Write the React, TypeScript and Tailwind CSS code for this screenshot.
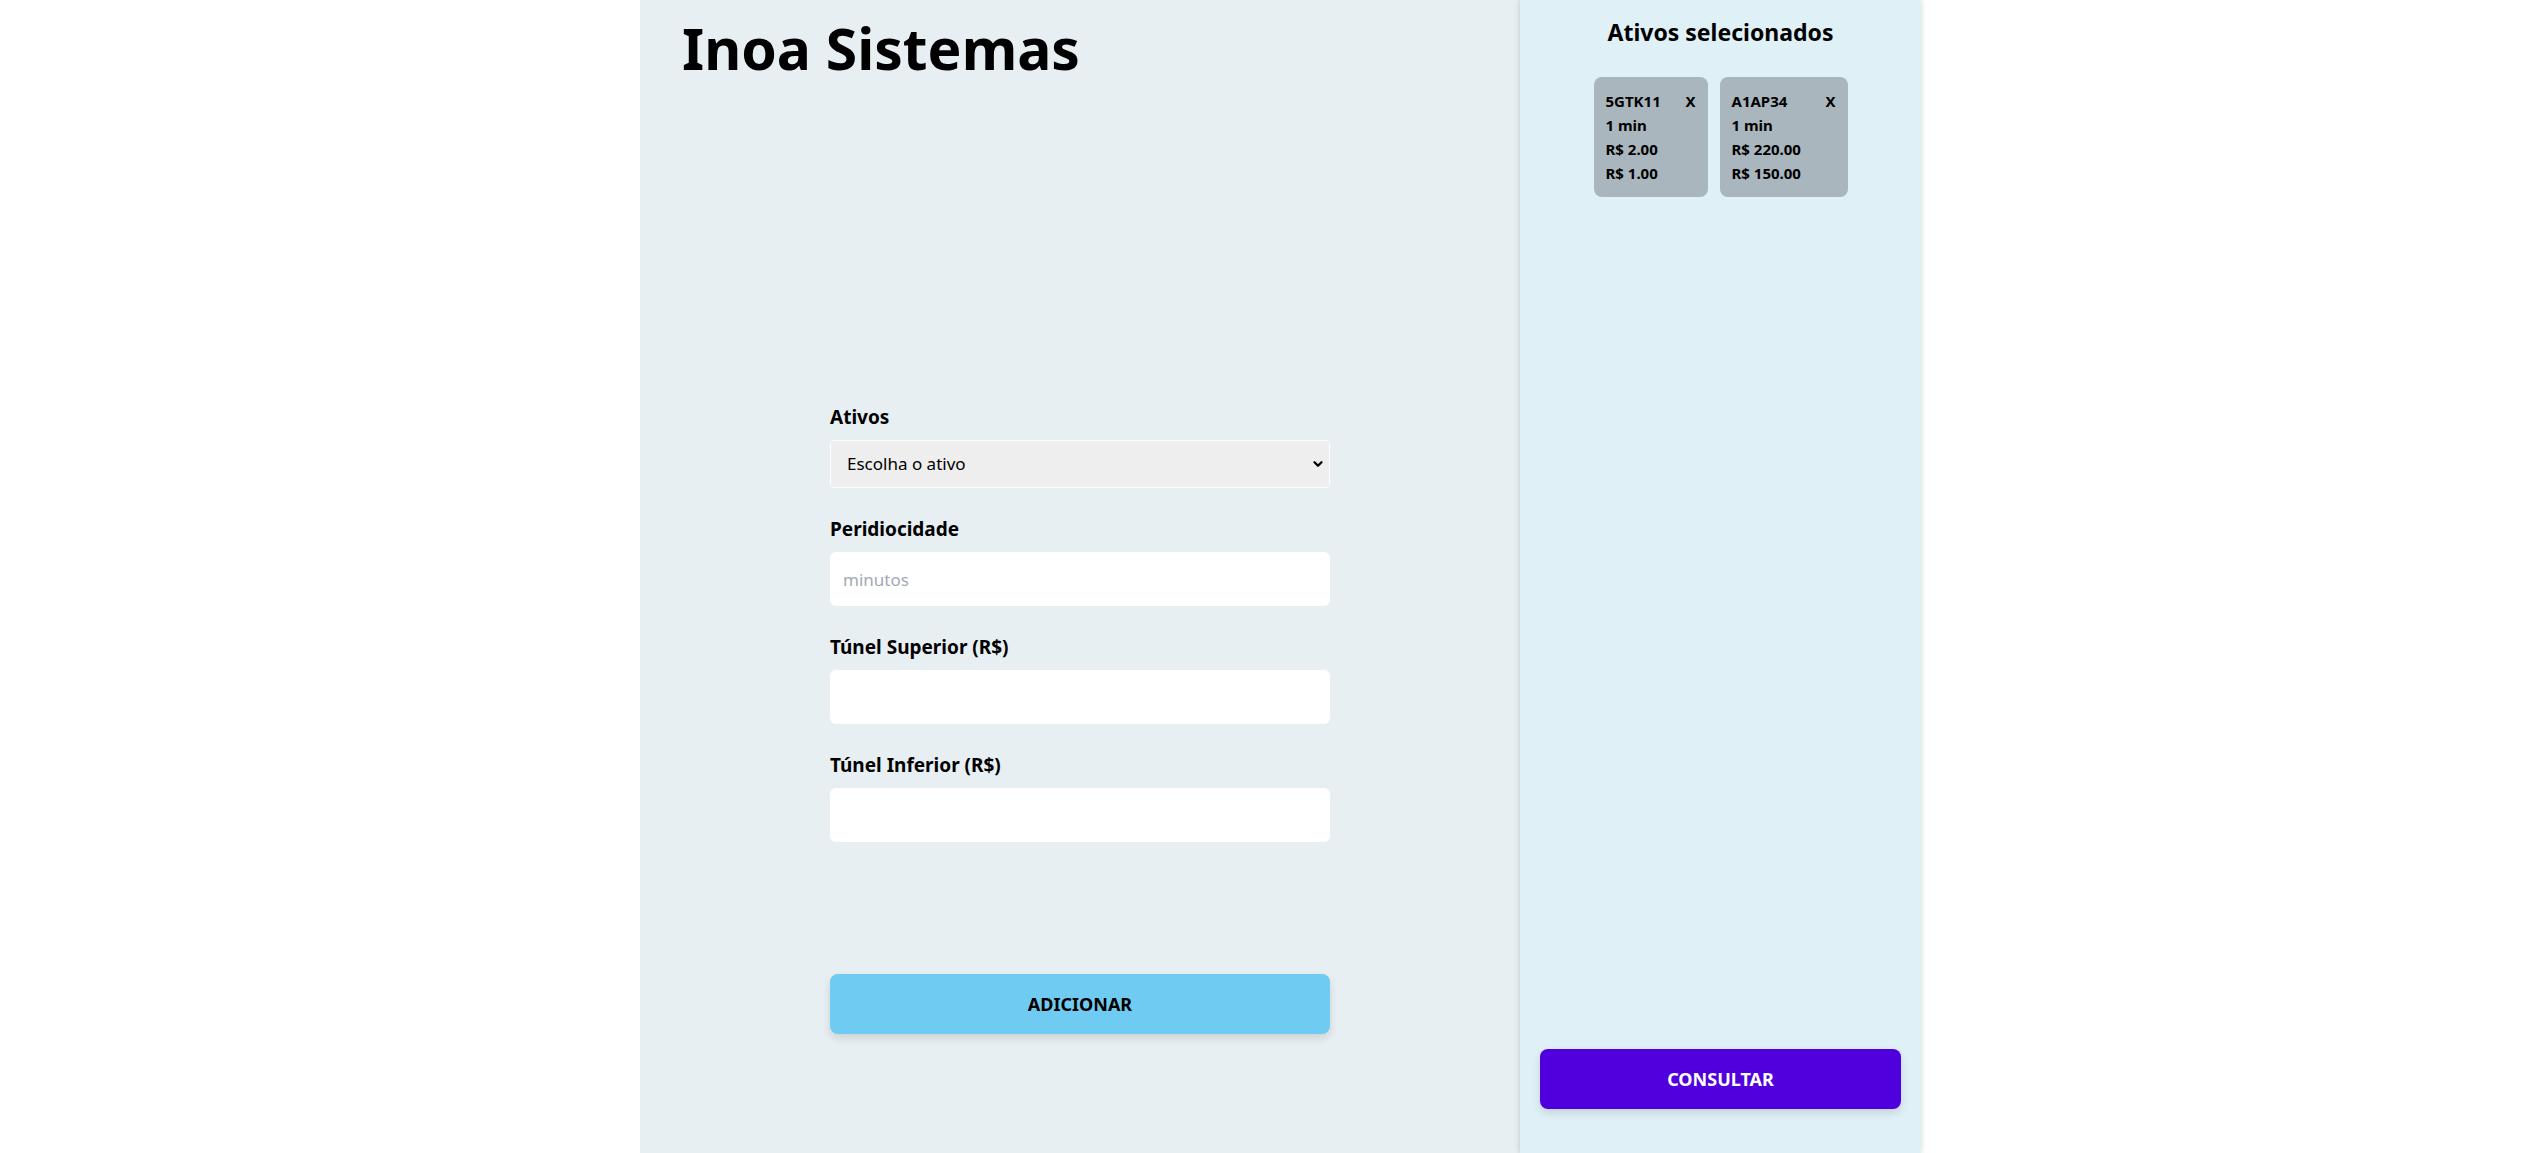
import { ChevronDown } from "lucide-react";

const ativos = [
  { code: "5GTK11", period: "1 min", upper: "R$ 2.00", lower: "R$ 1.00", width: "w-[114px]" },
  { code: "A1AP34", period: "1 min", upper: "R$ 220.00", lower: "R$ 150.00", width: "w-[128px]" },
];

const font = { fontFamily: '"Noto Sans", "Open Sans", sans-serif' };

function Field({ label, placeholder }: { label: string; placeholder?: string }) {
  return (
    <div className="mb-[29px]">
      <label className="block text-[19px] leading-[24px] font-bold text-black mb-[11px]">{label}</label>
      <input
        className="w-full h-[54px] rounded-[6px] bg-white px-[13px] text-[17px] text-black placeholder:text-[#a3a8b6] outline-none"
        placeholder={placeholder}
      />
    </div>
  );
}

export default function App() {
  return (
    <div className="min-h-screen w-full bg-white flex" style={font}>
      <div className="ml-[640px] flex">
        {/* Form area */}
        <main className="w-[880px] min-h-screen bg-[#e7eff2] flex flex-col">
          <h1 className="pl-[42px] pt-[8px] text-[57px] leading-[80px] font-bold text-black">
            Inoa Sistemas
          </h1>

          <div className="w-[500px] mx-auto mt-[317px]">
            <div className="mb-[29px]">
              <label className="block text-[19px] leading-[24px] font-bold text-black mb-[11px]">Ativos</label>
              <div className="relative">
                <select className="w-full h-[48px] appearance-none rounded-[4px] border border-[#fbfbfb] bg-[#eeeeee] pl-[16px] text-[17px] text-black outline-none">
                  <option>Escolha o ativo</option>
                </select>
                <ChevronDown
                  className="absolute right-[5px] top-1/2 -translate-y-1/2 w-[14px] h-[14px] text-black pointer-events-none"
                  strokeWidth={4}
                />
              </div>
            </div>
            <Field label="Peridiocidade" placeholder="minutos" />
            <Field label="Túnel Superior (R$)" />
            <Field label="Túnel Inferior (R$)" />

            <button className="mt-[103px] w-full h-[60px] rounded-[8px] bg-[#6fcbf1] text-[18px] font-bold text-black shadow-[0_4px_8px_rgba(0,0,0,0.12)]">
              ADICIONAR
            </button>
          </div>
        </main>

        {/* Sidebar */}
        <aside className="w-[401px] min-h-screen bg-[#dff0f7] flex flex-col shadow-[0_0_6px_rgba(0,0,0,0.18)]">
          <h2 className="pt-[16px] text-center text-[23px] leading-[32px] font-bold text-black">
            Ativos selecionados
          </h2>

          <div className="mt-[29px] flex justify-center gap-[12px]">
            {ativos.map((a) => (
              <div
                key={a.code}
                className={`${a.width} rounded-[8px] bg-[#a9b6bd] p-[12px] text-[15px] leading-[24px] font-bold text-black`}
              >
                <div className="flex justify-between">
                  <span>{a.code}</span>
                  <button className="font-bold">X</button>
                </div>
                <div>{a.period}</div>
                <div>{a.upper}</div>
                <div>{a.lower}</div>
              </div>
            ))}
          </div>

          <button className="mt-auto mb-[44px] mx-[20px] h-[60px] rounded-[8px] bg-[#5000dc] text-[18px] font-bold text-white shadow-[0_4px_8px_rgba(0,0,0,0.12)]">
            CONSULTAR
          </button>
        </aside>
      </div>
    </div>
  );
}
